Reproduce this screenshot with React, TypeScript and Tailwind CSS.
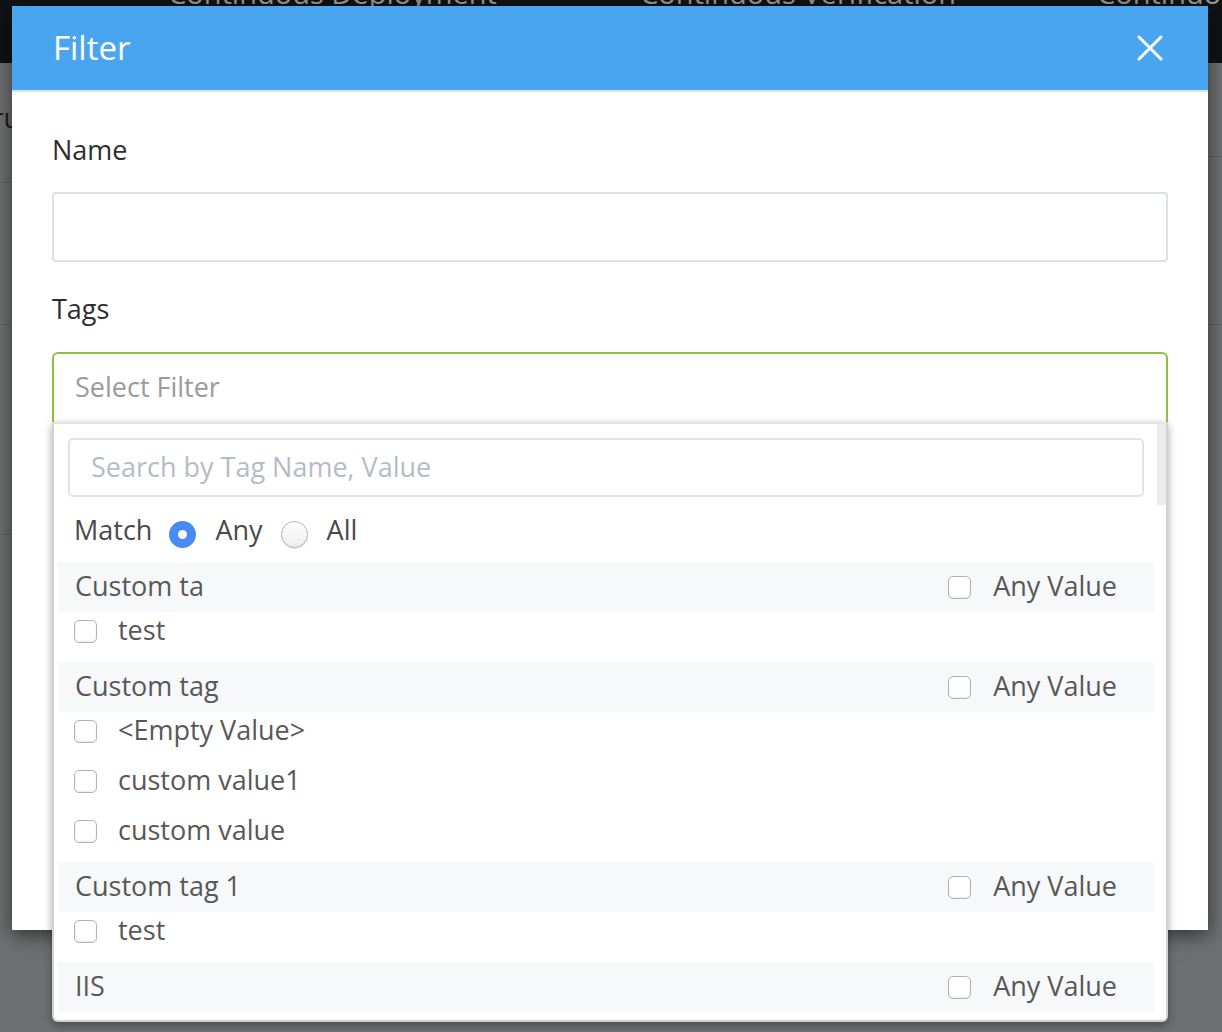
import React from 'react';

const groups = [
  { name: 'Custom ta', values: ['test'] },
  { name: 'Custom tag', values: ['<Empty Value>', 'custom value1', 'custom value'] },
  { name: 'Custom tag 1', values: ['test'] },
  { name: 'IIS', values: [] as string[] },
];

function Checkbox() {
  return (
    <span className="block h-[23px] w-[23px] shrink-0 rounded-[5px] border border-[#b2b2b2] bg-white shadow-[inset_0_-1px_2px_rgba(0,0,0,0.08)]" />
  );
}

function Radio({ checked }: { checked?: boolean }) {
  if (checked) {
    return (
      <span className="mt-[9px] flex h-[27px] w-[27px] shrink-0 items-center justify-center rounded-full bg-[#4a8af4]">
        <span className="h-[9px] w-[9px] rounded-full bg-white" />
      </span>
    );
  }
  return (
    <span className="mt-[9px] block h-[27px] w-[27px] shrink-0 rounded-full border border-[#b3b3b3] bg-gradient-to-b from-white to-[#eeeeee] shadow-[0_1px_1px_rgba(0,0,0,0.12)]" />
  );
}

function TagGroup({ name, values }: { name: string; values: string[] }) {
  return (
    <div>
      <div className="ml-[4px] mr-[12px] flex h-[50px] items-center justify-between bg-[#f7f8fa] pl-[17px] pr-[37px]">
        <span className="mb-[3px]">{name}</span>
        <div className="flex items-center gap-[22px]">
          <Checkbox />
          <span className="mb-[3px]">Any Value</span>
        </div>
      </div>
      {values.map((v, i) => (
        <div key={i} className="flex h-[50px] items-start pl-[20px] pt-[8px]">
          <div className="flex h-[23px] items-center gap-[21px]">
            <Checkbox />
            <span className="mb-[3px]">{v}</span>
          </div>
        </div>
      ))}
    </div>
  );
}

export default function App() {
  return (
    <div className="relative h-[1032px] w-[1222px] overflow-hidden bg-[#6e6f71] font-['Open_Sans',sans-serif]">
      {/* page behind the overlay */}
      <div className="h-[63px] overflow-hidden bg-[#111215]">
        <div className="-mt-[27px] flex pl-[168px] text-[29px] leading-[40px] text-[#9a9a9a]">
          <span className="w-[472px] shrink-0">Continuous Deployment</span>
          <span className="w-[457px] shrink-0">Continuous Verification</span>
          <span className="shrink-0">Continuous Efficiency</span>
        </div>
      </div>
      <div className="flex justify-between">
        <div className="w-[12px] overflow-hidden">
          <div className="h-[120px] border-b border-[#5e5f61] pt-[36px] text-[28px] leading-[36px] text-[#1e1e1e]">
            <span className="-ml-[8px]">ru</span>
          </div>
          <div className="h-[142px] border-b border-[#5e5f61]" />
          <div className="h-[210px] border-b border-[#5e5f61]" />
        </div>
        <div className="w-[14px]">
          <div className="h-[94px] border-b border-[#5e5f61]" />
          <div className="h-[168px] border-b border-[#5e5f61]" />
        </div>
      </div>

      {/* modal */}
      <div className="absolute left-[12px] top-[6px] w-[1196px] bg-white shadow-[0_5px_18px_rgba(0,0,0,0.55)]">
        <div className="flex h-[86px] items-center justify-between border-b-2 border-[#dce5ed] bg-[#4aa5f0] pl-[41px] pr-[45px]">
          <span className="text-[33px] leading-[40px] text-white">Filter</span>
          <svg width="26" height="26" viewBox="0 0 26 26" fill="none">
            <path d="M2 2L24 24M24 2L2 24" stroke="white" strokeWidth="3" strokeLinecap="round" />
          </svg>
        </div>

        <div className="h-[838px] px-[40px] pt-[40px] text-[27px] leading-[36px]">
          <div className="text-[#2e2e2e]">Name</div>
          <div className="mt-[24px] h-[70px] rounded-[4px] border-2 border-[#dde0e4]" />

          <div className="mt-[29px] text-[#2e2e2e]">Tags</div>
          <div className="relative mt-[25px]">
            <div className="flex h-[70px] items-center rounded-t-[6px] border-2 border-b-0 border-[#8ac344] pl-[21px] text-[#9b9b9b]">
              <span className="mb-[3px]">Select Filter</span>
            </div>

            {/* dropdown */}
            <div className="absolute left-0 right-0 top-full h-[600px] overflow-hidden rounded-b-[6px] border-x-2 border-b-2 border-t-2 border-x-[#d2d2d2] border-b-[#cfcfcf] border-t-[#e4e4e4] bg-white text-[#585858] shadow-[0_3px_8px_rgba(0,0,0,0.35)]">
              <div className="absolute right-0 top-0 h-[81px] w-[9px] bg-[#ececec]" />
              <div className="pt-[14px]">
                <div className="ml-[14px] mr-[22px] flex h-[59px] items-center rounded-[5px] border-2 border-[#e0e3e7] pl-[21px] text-[#b4bcc6]">
                  <span className="mb-[2px]">Search by Tag Name, Value</span>
                </div>
                <div className="flex h-[65px] items-center pl-[20px] text-[#4a4a4a]">
                  <span className="mr-[17px]">Match</span>
                  <Radio checked />
                  <span className="ml-[19px] mr-[18px]">Any</span>
                  <Radio />
                  <span className="ml-[19px]">All</span>
                </div>
                {groups.map((g) => (
                  <TagGroup key={g.name} name={g.name} values={g.values} />
                ))}
              </div>
            </div>
          </div>
        </div>
      </div>
    </div>
  );
}
